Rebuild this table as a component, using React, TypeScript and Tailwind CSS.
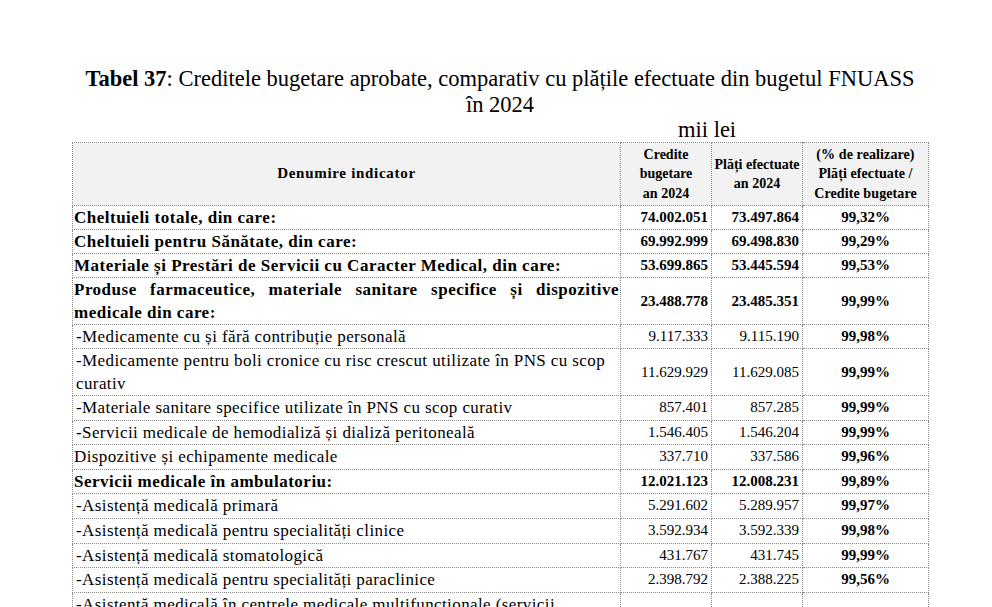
import React from "react";

type Row = {
  label: string;
  credite: string;
  plati: string;
  pct: string;
  bold?: boolean;
  indent?: boolean;
  justify?: boolean;
};

const rows: Row[] = [
  { label: "Cheltuieli totale, din care:", credite: "74.002.051", plati: "73.497.864", pct: "99,32%", bold: true },
  { label: "Cheltuieli pentru Sănătate, din care:", credite: "69.992.999", plati: "69.498.830", pct: "99,29%", bold: true },
  { label: "Materiale și Prestări de Servicii cu Caracter Medical, din care:", credite: "53.699.865", plati: "53.445.594", pct: "99,53%", bold: true },
  { label: "Produse farmaceutice, materiale sanitare specifice și dispozitive medicale din care:", credite: "23.488.778", plati: "23.485.351", pct: "99,99%", bold: true, justify: true },
  { label: "-Medicamente cu și fără contribuție personală", credite: "9.117.333", plati: "9.115.190", pct: "99,98%", indent: true },
  { label: "-Medicamente pentru boli cronice cu risc crescut utilizate în PNS cu scop\ncurativ", credite: "11.629.929", plati: "11.629.085", pct: "99,99%", indent: true },
  { label: "-Materiale sanitare specifice utilizate în PNS cu scop curativ", credite: "857.401", plati: "857.285", pct: "99,99%", indent: true },
  { label: "-Servicii medicale de hemodializă și dializă peritoneală", credite: "1.546.405", plati: "1.546.204", pct: "99,99%", indent: true },
  { label: "Dispozitive și echipamente medicale", credite: "337.710", plati: "337.586", pct: "99,96%" },
  { label: "Servicii medicale în ambulatoriu:", credite: "12.021.123", plati: "12.008.231", pct: "99,89%", bold: true },
  { label: "-Asistență medicală primară", credite: "5.291.602", plati: "5.289.957", pct: "99,97%", indent: true },
  { label: "-Asistență medicală pentru specialități clinice", credite: "3.592.934", plati: "3.592.339", pct: "99,98%", indent: true },
  { label: "-Asistență medicală stomatologică", credite: "431.767", plati: "431.745", pct: "99,99%", indent: true },
  { label: "-Asistență medicală pentru specialități paraclinice", credite: "2.398.792", plati: "2.388.225", pct: "99,56%", indent: true },
  { label: "-Asistență medicală în centrele medicale multifuncționale (servicii", credite: "", plati: "", pct: "", indent: true },
];

const cell = "border border-dotted border-[#8a8a8a] p-0";

export default function App() {
  return (
    <div className="min-h-[607px] bg-white text-black font-['Liberation_Serif',serif]">
      <div className="pt-[66px] ml-[72px] w-[856px] text-center text-[22.5px] leading-[26px]">
        <span className="font-bold">Tabel 37</span>: Creditele bugetare aprobate, comparativ cu plățile efectuate din bugetul FNUASS
        <br />
        în 2024
      </div>
      <div className="ml-[678px] text-[22.5px] leading-[24px]">mii lei</div>
      <table className="ml-[72px] w-[856px] border-collapse table-fixed text-[15px]">
        <colgroup>
          <col className="w-[548px]" />
          <col className="w-[91px]" />
          <col className="w-[91px]" />
          <col className="w-[126px]" />
        </colgroup>
        <thead>
          <tr className="bg-[#f2f2f2] h-[63px] text-[14px] leading-[19.5px] font-bold">
            <th className={`${cell} text-center align-middle text-[15px] tracking-[0.7px]`}>Denumire indicator</th>
            <th className={`${cell} text-center align-middle`}>Credite<br />bugetare<br />an 2024</th>
            <th className={`${cell} text-center align-middle`}>Plăți efectuate<br />an 2024</th>
            <th className={`${cell} text-center align-middle tracking-[0.1px]`}>(% de realizare)<br />Plăți efectuate /<br />Credite bugetare</th>
          </tr>
        </thead>
        <tbody>
          {rows.map((r, i) => (
            <tr key={i} className={i >= 6 ? "leading-[23.6px]" : "leading-[23px]"}>
              <td
                className={`${cell} align-top text-[17px] whitespace-pre-line ${r.bold ? "font-bold tracking-[0.5px]" : "tracking-[0.4px]"} ${r.indent ? "pl-[3px] pr-[1px]" : "px-[1px]"} ${r.justify ? "text-justify" : ""}`}
              >
                {r.label}
              </td>
              <td className={`${cell} text-right pr-[3px] align-middle ${r.bold ? "font-bold" : ""}`}>{r.credite}</td>
              <td className={`${cell} text-right pr-[3px] align-middle ${r.bold ? "font-bold" : ""}`}>{r.plati}</td>
              <td className={`${cell} text-center align-middle font-bold`}>{r.pct}</td>
            </tr>
          ))}
        </tbody>
      </table>
    </div>
  );
}
